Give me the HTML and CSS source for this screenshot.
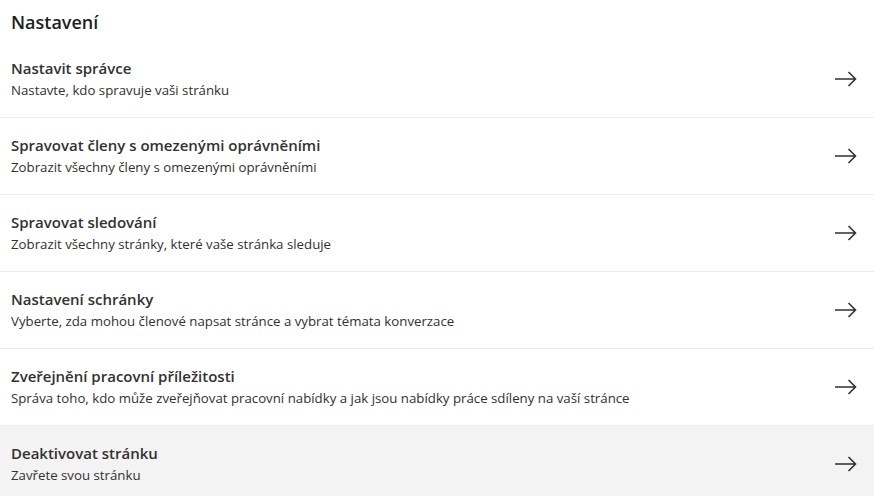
FILE: index.html
```html
<!DOCTYPE html>
<html lang="cs">
<head>
<meta charset="utf-8">
<link rel="stylesheet" href="styles.css">
</head>
<body>
<div class="page">
  <h1 class="heading">Nastavení</h1>
  <ul class="list">
    <li class="row">
      <div class="text"><div class="title">Nastavit správce</div><div class="sub">Nastavte, kdo spravuje vaši stránku</div></div>
      <svg class="arrow" viewBox="0 0 22 16"><path d="M0 8H20.5M13.5 1L20.5 8L13.5 15"/></svg>
    </li>
    <li class="row">
      <div class="text"><div class="title">Spravovat členy s omezenými oprávněními</div><div class="sub">Zobrazit všechny členy s omezenými oprávněními</div></div>
      <svg class="arrow" viewBox="0 0 22 16"><path d="M0 8H20.5M13.5 1L20.5 8L13.5 15"/></svg>
    </li>
    <li class="row">
      <div class="text"><div class="title">Spravovat sledování</div><div class="sub">Zobrazit všechny stránky, které vaše stránka sleduje</div></div>
      <svg class="arrow" viewBox="0 0 22 16"><path d="M0 8H20.5M13.5 1L20.5 8L13.5 15"/></svg>
    </li>
    <li class="row">
      <div class="text"><div class="title">Nastavení schránky</div><div class="sub">Vyberte, zda mohou členové napsat stránce a vybrat témata konverzace</div></div>
      <svg class="arrow" viewBox="0 0 22 16"><path d="M0 8H20.5M13.5 1L20.5 8L13.5 15"/></svg>
    </li>
    <li class="row">
      <div class="text"><div class="title">Zveřejnění pracovní příležitosti</div><div class="sub">Správa toho, kdo může zveřejňovat pracovní nabídky a jak jsou nabídky práce sdíleny na vaší stránce</div></div>
      <svg class="arrow" viewBox="0 0 22 16"><path d="M0 8H20.5M13.5 1L20.5 8L13.5 15"/></svg>
    </li>
    <li class="row active">
      <div class="text"><div class="title">Deaktivovat stránku</div><div class="sub">Zavřete svou stránku</div></div>
      <svg class="arrow" viewBox="0 0 22 16"><path d="M0 8H20.5M13.5 1L20.5 8L13.5 15"/></svg>
    </li>
  </ul>
</div>
</body>
</html>
```
FILE: styles.css
```css
html, body {
  margin: 0;
  padding: 0;
  background: #ffffff;
}
body {
  font-family: "Open Sans", "Noto Sans", sans-serif;
  color: #323130;
}
.page {
  width: 874px;
  height: 496px;
  overflow: hidden;
}
.heading {
  margin: 0;
  padding: 9px 11px 0;
  height: 32px;
  font-size: 18px;
  font-weight: 600;
  line-height: 26px;
  color: #201f1e;
}
.list {
  list-style: none;
  margin: 0;
  padding: 0;
}
.row {
  display: flex;
  align-items: center;
  justify-content: space-between;
  height: 76px;
  padding: 0 17px 0 11px;
  border-bottom: 1px solid #ebebeb;
}
.row.active {
  background: #f3f3f3;
  border-bottom: none;
}
.text {
  display: flex;
  flex-direction: column;
  gap: 3px;
  padding-bottom: 2px;
}
.title {
  font-size: 15px;
  font-weight: 600;
  line-height: 20px;
  color: #323130;
}
.sub {
  font-size: 13.25px;
  line-height: 18px;
  color: #323130;
}
.arrow {
  width: 22px;
  height: 16px;
  fill: none;
  stroke: #323130;
  stroke-width: 1.6;
}
```
